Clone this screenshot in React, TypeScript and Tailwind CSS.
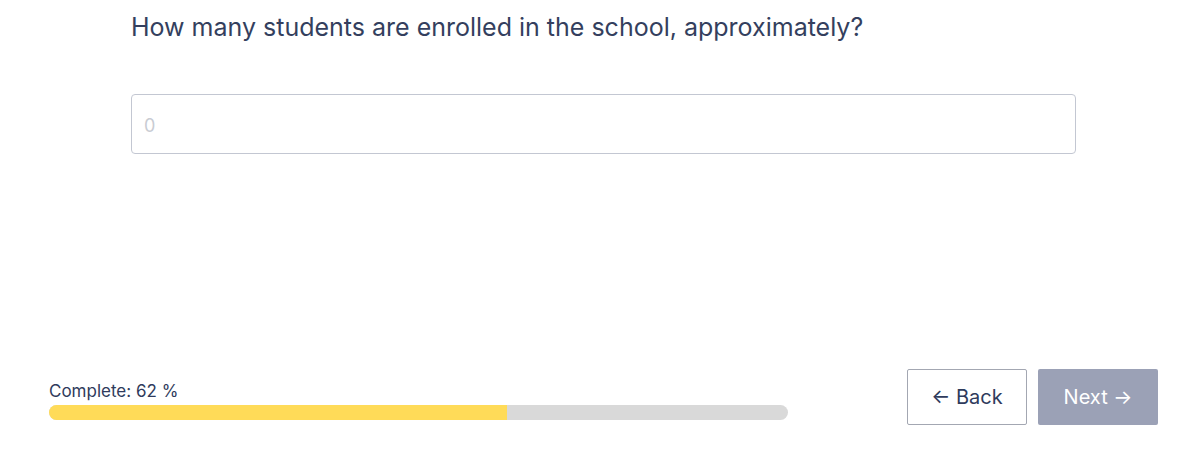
import React, { useState } from 'react';

function App() {
    const [students, setStudents] = useState('');
    const progress = 62;

    return (
        <div className="h-[453px] w-full bg-white flex flex-col font-['Inter',sans-serif]">
            <div className="ml-[131px] w-[945px] pt-[10px]">
                <h1 className="text-[25px] leading-[34px] text-[#343f5e] font-normal">
                    How many students are enrolled in the school, approximately?
                </h1>
                <input
                    type="number"
                    value={students}
                    onChange={(e) => setStudents(e.target.value)}
                    placeholder="0"
                    className="mt-[50px] block w-full h-[60px] px-3 pt-[3px] border border-[#c3c7d2] rounded-[4px] text-[18px] text-[#2f3b5c] placeholder-[#c9ccd3] focus:outline-none"
                />
            </div>

            <div className="mt-auto mb-[28px] flex items-end justify-between pl-[49px] pr-[23px]">
                <div className="w-[739px] pb-[5px]">
                    <div className="text-[17px] leading-[20px] text-[#2f3b5c] mb-[4px]">
                        Complete: {progress} %
                    </div>
                    <div className="h-[15px] w-full bg-[#d9d9d9] rounded-full overflow-hidden">
                        <div className="h-full bg-[#ffdb58]" style={{ width: `${progress}%` }}></div>
                    </div>
                </div>

                <div className="flex gap-[11px]">
                    <button className="w-[120px] h-[56px] border border-[#a3a7b2] rounded-[2px] bg-white text-[20px] text-[#2f3b5c] flex items-center justify-center">
                        ← Back
                    </button>
                    <button className="w-[120px] h-[56px] rounded-[2px] bg-[#9ba1b6] text-[20px] text-white flex items-center justify-center">
                        Next →
                    </button>
                </div>
            </div>
        </div>
    );
}

export default App;
